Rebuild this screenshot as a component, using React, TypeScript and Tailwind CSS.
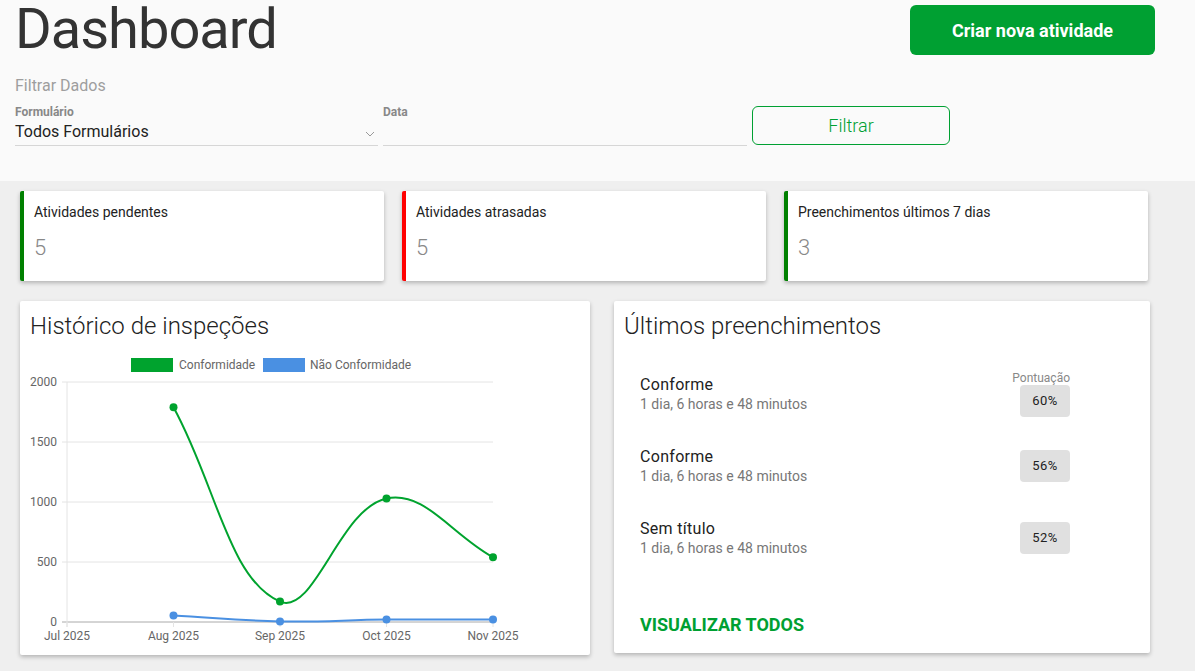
import React from "react";

const font = { fontFamily: "Roboto, 'Noto Sans', sans-serif" };

const cards = [
  { title: "Atividades pendentes", value: 5, border: "border-l-[#008000]" },
  { title: "Atividades atrasadas", value: 5, border: "border-l-[#ff0000]" },
  { title: "Preenchimentos últimos 7 dias", value: 3, border: "border-l-[#008000]" },
];

const recent = [
  { title: "Conforme", when: "1 dia, 6 horas e 48 minutos", score: "60%" },
  { title: "Conforme", when: "1 dia, 6 horas e 48 minutos", score: "56%" },
  { title: "Sem título", when: "1 dia, 6 horas e 48 minutos", score: "52%" },
];

const months = ["Jul 2025", "Aug 2025", "Sep 2025", "Oct 2025", "Nov 2025"];
const xs = [47, 153.5, 260, 366.5, 473];
const yOf = (v: number) => 281 - v * 0.12;

const conform = [
  { x: xs[1], y: yOf(1790) },
  { x: xs[2], y: yOf(170) },
  { x: xs[3], y: yOf(1030) },
  { x: xs[4], y: yOf(540) },
];
const nonConform = [
  { x: xs[1], y: yOf(55) },
  { x: xs[2], y: yOf(5) },
  { x: xs[3], y: yOf(20) },
  { x: xs[4], y: yOf(20) },
];

// same spline as chart.js (tension 0.4)
function splinePath(pts: { x: number; y: number }[], t = 0.4) {
  const cps = pts.map((p, i) => {
    const prev = pts[i - 1] || p;
    const next = pts[i + 1] || p;
    const d01 = Math.hypot(p.x - prev.x, p.y - prev.y);
    const d12 = Math.hypot(next.x - p.x, next.y - p.y);
    const sum = d01 + d12 || 1;
    const fa = (t * d01) / sum;
    const fb = (t * d12) / sum;
    return {
      prev: { x: p.x - fa * (next.x - prev.x), y: p.y - fa * (next.y - prev.y) },
      next: { x: p.x + fb * (next.x - prev.x), y: p.y + fb * (next.y - prev.y) },
    };
  });
  let d = `M${pts[0].x},${pts[0].y}`;
  for (let i = 1; i < pts.length; i++) {
    const a = cps[i - 1].next;
    const b = cps[i].prev;
    d += ` C${a.x},${a.y} ${b.x},${b.y} ${pts[i].x},${pts[i].y}`;
  }
  return d;
}

function Chart() {
  const ticks = [0, 500, 1000, 1500, 2000];
  return (
    <svg width="570" height="314" className="block" style={font}>
      <rect x="111" y="17" width="42" height="14" fill="#00a32e" />
      <text x="159" y="28" fontSize="12" fill="#666">Conformidade</text>
      <rect x="243" y="17" width="42" height="14" fill="#4a90e2" />
      <text x="290" y="28" fontSize="12" fill="#666">Não Conformidade</text>

      {ticks.map((v) => (
        <g key={v}>
          <line x1="42" x2="473" y1={yOf(v)} y2={yOf(v)} stroke={v === 0 ? "#aaa" : "#e4e4e4"} />
          <text x="37" y={yOf(v) + 4} fontSize="12" fill="#666" textAnchor="end">{v}</text>
        </g>
      ))}
      <line x1="47" x2="47" y1="41" y2="286" stroke="#e4e4e4" />
      {xs.map((x, i) => (
        <g key={x}>
          <line x1={x} x2={x} y1="281" y2="286" stroke="#e4e4e4" />
          <text x={x} y="299" fontSize="12" fill="#666" textAnchor="middle">{months[i]}</text>
        </g>
      ))}

      <path d={splinePath(nonConform)} fill="none" stroke="#4a90e2" strokeWidth="2" />
      {nonConform.map((p) => (
        <circle key={p.x} cx={p.x} cy={p.y} r="4" fill="#4a90e2" />
      ))}
      <path d={splinePath(conform)} fill="none" stroke="#00a32e" strokeWidth="2" />
      {conform.map((p) => (
        <circle key={p.x} cx={p.x} cy={p.y} r="4" fill="#00a32e" />
      ))}
    </svg>
  );
}

export default function App() {
  return (
    <div className="min-h-screen w-full bg-[#efefef]" style={font}>
      <div className="h-[181px] bg-[#fafafa] px-[15px]">
        <div className="flex items-start justify-between">
          <h1 className="text-[56px] leading-[58px] font-normal tracking-[-1px] text-[#333]">Dashboard</h1>
          <button className="mr-[25px] mt-[5px] flex h-[50px] w-[245px] items-center justify-center rounded-[6px] bg-[#00a032] text-[18px] font-bold text-white">
            Criar nova atividade
          </button>
        </div>
        <p className="mt-[16px] text-[16px] leading-6 text-[#9e9e9e]">Filtrar Dados</p>
        <div className="mt-[6px] flex items-start">
          <div className="w-[363px]">
            <p className="text-[12px] leading-4 font-bold text-[#888]">Formulário</p>
            <div className="flex items-center justify-between border-b border-[#d6d6d6] pb-px">
              <span className="text-[16px] leading-6 text-[#222]">Todos Formulários</span>
              <svg width="10" height="6" viewBox="0 0 10 6" className="mr-[3px] mt-[4px]">
                <path d="M1 1l4 4 4-4" fill="none" stroke="#999" strokeWidth="1" />
              </svg>
            </div>
          </div>
          <div className="ml-[5px] w-[364px]">
            <p className="text-[12px] leading-4 font-bold text-[#888]">Data</p>
            <div className="h-[26px] border-b border-[#d6d6d6]" />
          </div>
          <button className="ml-[5px] mt-[2px] h-[39px] w-[198px] rounded-[6px] border border-[#00a032] text-[18px] font-light text-[#00a032]">
            Filtrar
          </button>
        </div>
      </div>

      <div className="mt-[10px] flex gap-[18px] px-[20px]">
        {cards.map((c) => (
          <div
            key={c.title}
            className={`h-[90px] w-[364px] rounded-[2px] border-l-4 bg-white pl-[10px] pt-[11px] shadow-[0_2px_4px_rgba(0,0,0,0.25)] ${c.border}`}
          >
            <p className="text-[14px] leading-5 text-[#222]">{c.title}</p>
            <p className="mt-[12px] text-[22px] leading-7 font-light text-[#888]">{c.value}</p>
          </div>
        ))}
      </div>

      <div className="mt-[20px] flex items-start px-[20px]">
        <div className="h-[354px] w-[570px] rounded-[2px] bg-white shadow-[0_2px_4px_rgba(0,0,0,0.25)]">
          <h2 className="px-[10px] pt-[10px] text-[24px] leading-[30px] font-light text-[#222]">Histórico de inspeções</h2>
          <Chart />
        </div>

        <div className="ml-[24px] flex h-[352px] w-[536px] flex-col rounded-[2px] bg-white shadow-[0_2px_4px_rgba(0,0,0,0.25)]">
          <h2 className="px-[10px] pt-[10px] text-[24px] leading-[30px] font-light text-[#222]">Últimos preenchimentos</h2>
          <div className="mt-[17px]">
            {recent.map((r, i) => (
              <div key={i} className="flex h-[72px] items-center justify-between pl-[26px] pr-[80px]">
                <div>
                  <p className="text-[16px] leading-5 tracking-[0.3px] text-[#222]">{r.title}</p>
                  <p className="text-[14px] leading-[18px] text-[#777]">{r.when}</p>
                </div>
                <div className="flex flex-col items-end">
                  {i === 0 && <p className="text-[12px] leading-[14px] text-[#888]">Pontuação</p>}
                  <span className="flex h-[32px] w-[50px] items-center justify-center rounded-[4px] bg-[#e0e0e0] text-[13px] tracking-[0.5px] text-[#222]">
                    {r.score}
                  </span>
                </div>
              </div>
            ))}
          </div>
          <p className="mt-[39px] pl-[26px] text-[18px] leading-6 font-bold text-[#00a032]">VISUALIZAR TODOS</p>
        </div>
      </div>
    </div>
  );
}
